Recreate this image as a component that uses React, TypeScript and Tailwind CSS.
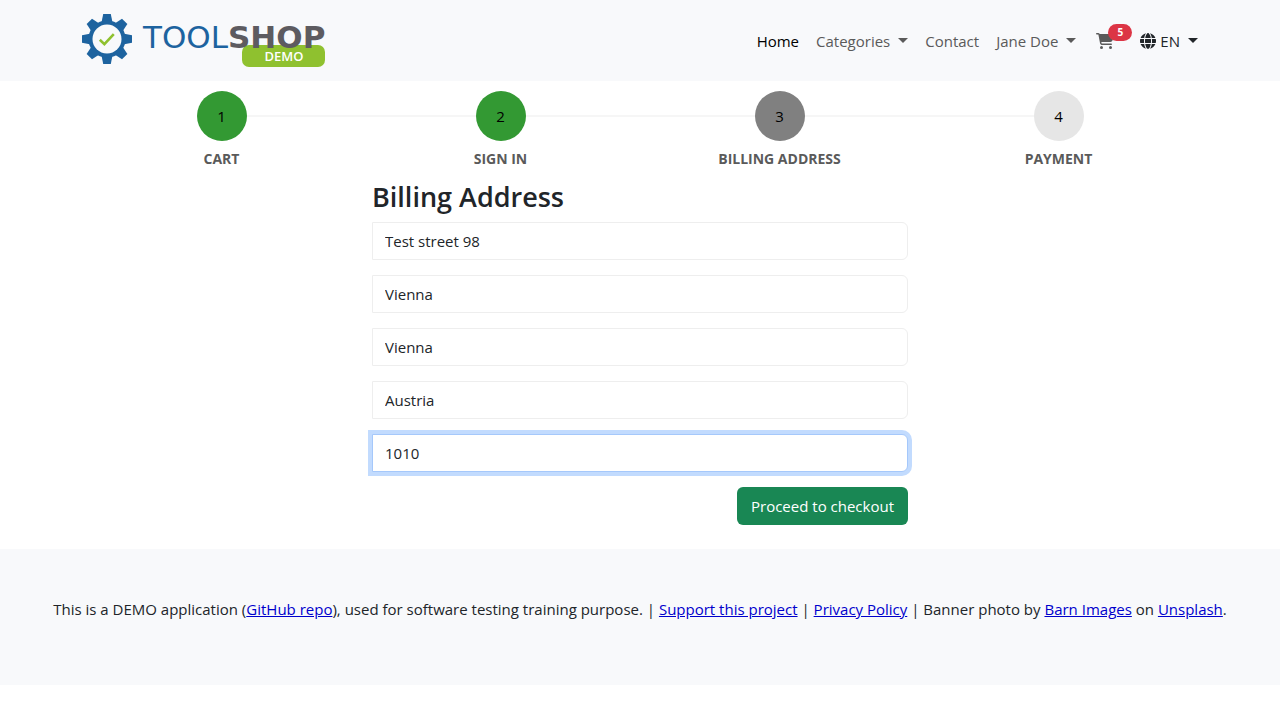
import { FaCartShopping, FaGlobe } from "react-icons/fa6";

const steps = [
  { label: "Cart", circle: "bg-[#339933]" },
  { label: "Sign in", circle: "bg-[#339933]" },
  { label: "Billing Address", circle: "bg-[#808080]" },
  { label: "Payment", circle: "bg-[#e6e6e6]" },
];

const fields = [
  { id: "address", label: "Address", value: "Test street 98" },
  { id: "city", label: "City", value: "Vienna" },
  { id: "state", label: "State", value: "Vienna" },
  { id: "country", label: "Country", value: "Austria" },
  { id: "postcode", label: "Postcode", value: "1010", active: true },
];

const teeth = [0, 45, 90, 135, 180, 225, 270, 315];

function Caret() {
  return (
    <svg aria-hidden="true" viewBox="0 0 10 5" className="ml-2 h-[5px] w-[10px] fill-current">
      <path d="M0 0H10L5 5Z" />
    </svg>
  );
}

function Logo() {
  return (
    <a href="#home" aria-label="Toolshop demo" className="flex items-center gap-[11px] pb-1">
      <svg aria-hidden="true" viewBox="-25 -25 50 50" className="size-[50px]">
        <g fill="#1d639f">
          {teeth.map((angle) => (
            <path key={angle} d="M-3.8 -25H3.8L5.6 -16H-5.6Z" transform={`rotate(${angle})`} />
          ))}
          <circle r="18.6" />
        </g>
        <circle r="14.5" fill="#f8f9fb" />
        <path d="M-7.2 0.8L-2.6 5.2L6.8 -4.8" fill="none" stroke="#8fc12f" strokeWidth="2.6" />
      </svg>
      <span className="relative isolate flex pb-1 font-['DejaVu_Sans',sans-serif] text-[31px] leading-6">
        <span className="text-[#1d639f]">TOOL</span>
        <span className="font-bold text-[#5d5b60]">SHOP</span>
        <span className="absolute top-[20px] right-0 -z-10 flex h-[22px] w-[83px] items-end justify-center rounded-[7px] bg-[#8fc12f] pb-1 font-['Open_Sans',sans-serif] text-[13px] leading-[14px] font-semibold text-white">
          DEMO
        </span>
      </span>
    </a>
  );
}

export default function App() {
  return (
    <div className="font-['Open_Sans','Noto_Sans',sans-serif] text-[15px] leading-6 text-[#212529]">
      <header className="bg-[#f8f9fb]">
        <div className="mx-auto flex h-[81px] max-w-[1140px] items-center justify-between px-3">
          <Logo />
          <nav aria-label="Main" className="flex items-center text-[#5a5a5a]">
            <div className="flex items-center gap-px">
              <a href="#home" className="px-2 text-black">Home</a>
              <button type="button" className="flex items-center px-2">Categories<Caret /></button>
              <a href="#contact" className="px-2">Contact</a>
              <button type="button" className="flex items-center px-2">Jane Doe<Caret /></button>
            </div>
            <a href="#cart" aria-label="Cart" className="relative ml-3 w-11">
              <FaCartShopping className="h-4 w-[18px]" />
              <span className="absolute -top-[9px] left-3 flex h-[17px] w-6 items-center justify-center rounded-full bg-[#dc3545] text-[10px] font-bold text-white">
                5
              </span>
            </a>
            <button type="button" className="flex items-center text-[#212529]">
              <FaGlobe className="mr-1 size-4" />EN<Caret />
            </button>
          </nav>
        </div>
      </header>

      <main className="mx-auto max-w-[1140px] px-3 pt-[10px] pb-6">
        <ol className="grid grid-cols-4">
          {steps.map((step, i) => (
            <li key={step.label} className="flex flex-col items-center">
              <div className="flex w-full items-center">
                <span className={i > 0 ? "h-[2px] flex-1 bg-[#f6f6f6]" : "flex-1"} />
                <span className={`flex size-[50px] items-center justify-center rounded-full text-black ${step.circle}`}>
                  {i + 1}
                </span>
                <span className={i < 3 ? "h-[2px] flex-1 bg-[#f6f6f6]" : "flex-1"} />
              </div>
              <span className="mt-[6px] text-[14px] font-bold text-[#5a5a5a] uppercase">{step.label}</span>
            </li>
          ))}
        </ol>

        <form className="mx-auto mt-[10px] max-w-[536px]" onSubmit={(e) => e.preventDefault()}>
          <h1 className="mb-[9px] text-[27px] leading-8 font-semibold">Billing Address</h1>
          <div className="flex flex-col gap-[15px]">
            {fields.map((field) => (
              <input
                key={field.id}
                id={field.id}
                aria-label={field.label}
                type="text"
                defaultValue={field.value}
                className={`h-[38px] w-full rounded-r-md border bg-white px-3 outline-none ${
                  field.active
                    ? "border-[#a5c8fb] ring-4 ring-[#c2dbfe]"
                    : "border-[#eeeeee]"
                }`}
              />
            ))}
            <button type="submit" className="h-[38px] self-end rounded-md bg-[#198754] px-[14px] text-white">
              Proceed to checkout
            </button>
          </div>
        </form>
      </main>

      <footer className="bg-[#f8f9fb] px-3 pt-12 pb-16 text-center">
        <p>
          This is a DEMO application (<a href="#github" className="text-[#0000cc] underline">GitHub repo</a>), used for
          software testing training purpose. | <a href="#support" className="text-[#0000cc] underline">Support this project</a> |{" "}
          <a href="#privacy" className="text-[#0000cc] underline">Privacy Policy</a> | Banner photo by{" "}
          <a href="#barn" className="text-[#0000cc] underline">Barn Images</a> on{" "}
          <a href="#unsplash" className="text-[#0000cc] underline">Unsplash</a>.
        </p>
      </footer>
    </div>
  );
}
